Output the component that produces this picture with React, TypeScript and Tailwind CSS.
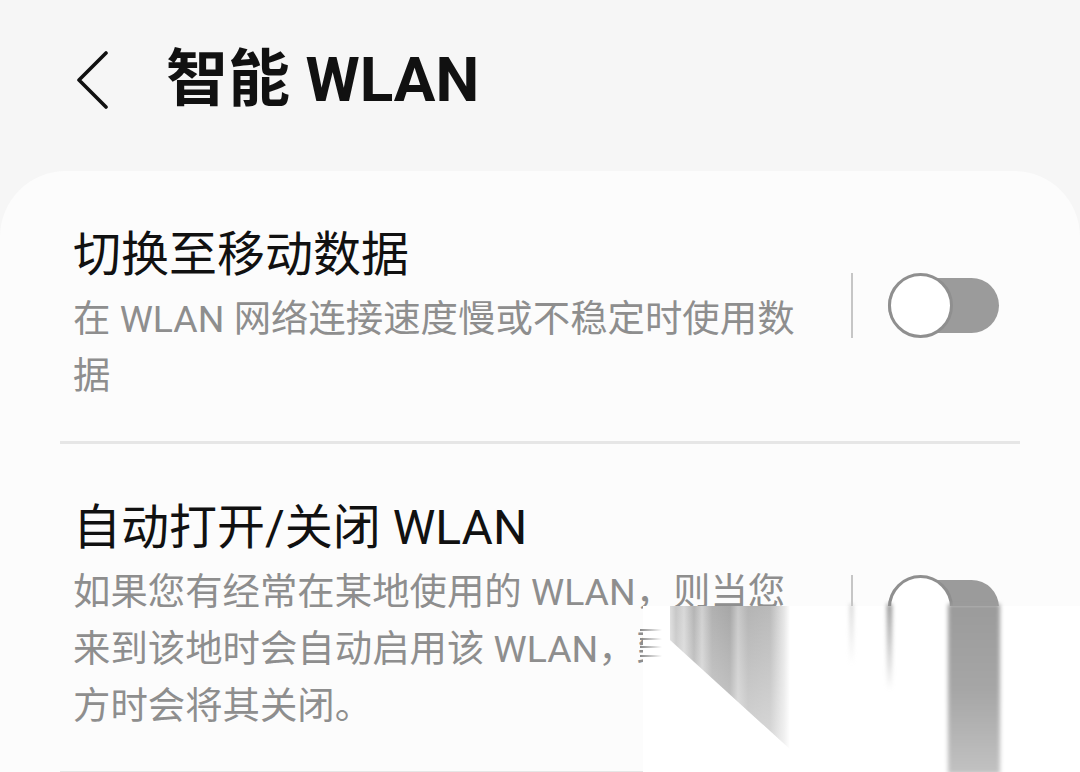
const Toggle = () => (
  <div className="flex items-center pb-[19px] mr-[21px]">
    <div className="w-[2px] h-[65px] bg-[#c6c6c6]" />
    <div className="relative ml-[35px] w-[111px] h-[65px] flex items-center">
      <div className="w-full h-[55px] rounded-full bg-[#9b9b9b]" />
      <div className="absolute left-0 top-0 size-[65px] rounded-full bg-white border-[3px] border-[#8f8f8f]" />
    </div>
  </div>
)

type RowProps = { title: string; lines: string[] }

const SettingRow = ({ title, lines }: RowProps) => (
  <div className="mx-[60px] flex items-center pt-[54px] pb-[36px] border-b-[3px] border-[#e6e6e6]">
    <div className="flex-1 pl-[13px]">
      <div className="text-[48px] leading-[60px] text-[#111]">{title}</div>
      <div className="mt-[6px] text-[37.4px] leading-[57px] text-[#8e8e8e]">
        {lines.map((line, i) => (
          <div key={i} className="whitespace-nowrap">
            {line}
          </div>
        ))}
      </div>
    </div>
    <Toggle />
  </div>
)

// the smeared corner in the bottom right of the screenshot
const Smear = () => (
  <div className="absolute left-[643px] top-[606px] right-0 bottom-0 bg-white">
    <div className="absolute left-[27px] top-0 w-[120px] h-[146px] [clip-path:polygon(0_0,120px_0,120px_143px,0_34px)] bg-[linear-gradient(to_bottom,rgba(255,255,255,0.05),rgba(255,255,255,0.5)),linear-gradient(90deg,#dcdcdc_0px,#c4c4c4_6px,#d6d6d6_14px,#b0b0b0_24px,#cecece_32px,#acacac_42px,#a2a2a2_60px,#c6c6c6_68px,#b0b0b0_78px,#b6b6b6_100px,#e4e4e4_114px,#ffffff_120px)]" />
    <div className="absolute left-[-3px] top-[23px] w-[22px] h-[2px] bg-gradient-to-r from-[#888] to-transparent" />
    <div className="absolute left-[-3px] top-[32px] w-[22px] h-[2px] bg-gradient-to-r from-[#888] to-transparent" />
    <div className="absolute left-[-3px] top-[40px] w-[22px] h-[2px] bg-gradient-to-r from-[#888] to-transparent" />
    <div className="absolute left-[-3px] top-[49px] w-[22px] h-[2px] bg-gradient-to-r from-[#888] to-transparent" />
    <div className="absolute left-[207px] top-[-2px] w-[3px] h-[60px] blur-[2px] bg-gradient-to-b from-[#c8c8c8] to-transparent" />
    <div className="absolute left-[244px] top-[-2px] w-[5px] h-[86px] blur-[2px] bg-gradient-to-b from-[#8f8f8f] to-transparent" />
    <div className="absolute left-[305px] top-[-2px] w-[52px] h-[170px] blur-[2px] bg-gradient-to-b from-[#9b9b9b] via-[#a6a6a6] to-[#c2c2c2]" />
  </div>
)

export default function App() {
  return (
    <div className="relative w-[1080px] h-[772px] overflow-hidden bg-[#f6f6f6] font-[Roboto,'Noto_Sans_CJK_SC',sans-serif]">
      <div className="h-[171px] flex items-center pb-[11px]">
        <svg className="ml-[75px]" width="34" height="58" viewBox="0 0 34 58" fill="none">
          <path d="M31 2 L4 29 L31 56" stroke="#111" strokeWidth="3.6" strokeLinecap="round" strokeLinejoin="round" />
        </svg>
        <h1 className="ml-[57px] text-[62px] font-bold leading-none text-[#111]">智能 WLAN</h1>
      </div>
      <div className="bg-[#fcfcfc] rounded-t-[66px] h-[601px]">
        <SettingRow title="切换至移动数据" lines={['在 WLAN 网络连接速度慢或不稳定时使用数', '据']} />
        <SettingRow
          title="自动打开/关闭 WLAN"
          lines={['如果您有经常在某地使用的 WLAN，则当您', '来到该地时会自动启用该 WLAN，到达其他地', '方时会将其关闭。']}
        />
      </div>
      <Smear />
    </div>
  )
}
